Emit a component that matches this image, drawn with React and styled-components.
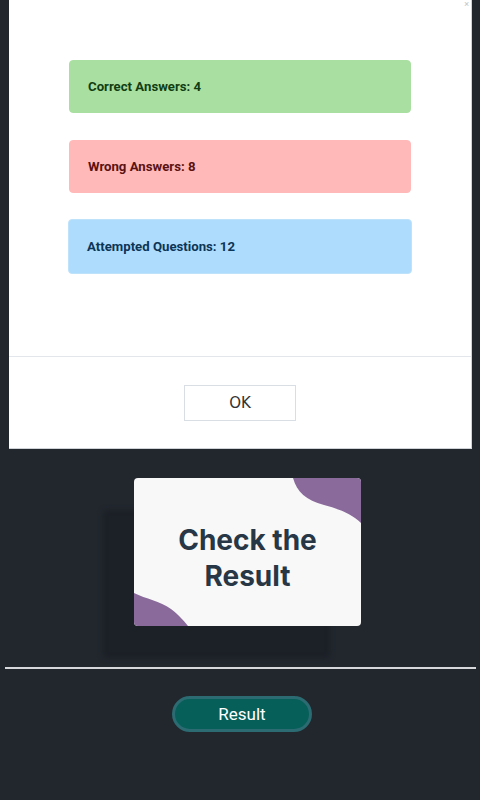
import styled, { createGlobalStyle } from "styled-components";

const GlobalStyle = createGlobalStyle`
  html, body {
    margin: 0;
    padding: 0;
    background-color: #22272e;
  }
  body {
    font-family: Roboto, "Liberation Sans", sans-serif;
  }
`;

const Page = styled.div`
  width: 480px;
  min-height: 800px;
  background-color: #22272e;
`;

const Modal = styled.div`
  position: relative;
  margin: 0 8px 0 9px;
  height: 449px;
  background-color: #fff;
  border-right: 1px solid #cfd3d8;
  border-bottom: 1px solid #cfd3d8;
  box-sizing: border-box;
  display: flex;
  flex-direction: column;
`;

const CloseMark = styled.span`
  position: absolute;
  top: 0;
  right: 2px;
  font-size: 9px;
  line-height: 9px;
  color: #c4c4c4;
`;

const ModalBody = styled.div`
  height: 357px;
  box-sizing: border-box;
  padding: 60px 60px 0;
  display: flex;
  flex-direction: column;
  gap: 27px;
  border-bottom: 1px solid #e3e6ea;
`;

const tones = {
  green: { bg: "#a9e0a1", fg: "#123d12", border: "#a9e0a1" },
  red: { bg: "#ffb9b9", fg: "#5a1212", border: "#ffb9b9" },
  blue: { bg: "#aedcfd", fg: "#0c3556", border: "#bfe2fb" },
};

const StatCard = styled.div`
  height: ${p => (p.$tone === "blue" ? "55px" : "53px")};
  margin: ${p => (p.$tone === "blue" ? "-1px -1px 0" : "0")};
  box-sizing: border-box;
  padding-left: 18px;
  display: flex;
  align-items: center;
  border-radius: 4px;
  border: 1px solid ${p => tones[p.$tone].border};
  background-color: ${p => tones[p.$tone].bg};
  color: ${p => tones[p.$tone].fg};
  font-family: Roboto, sans-serif;
  font-weight: 700;
  font-size: 13.2px;
`;

const ModalFooter = styled.div`
  flex: 1;
  display: flex;
  justify-content: center;
  padding-top: 28px;
  box-sizing: border-box;
`;

const OkButton = styled.button`
  width: 112px;
  height: 36px;
  background: #fff;
  border: 1px solid #d9dee4;
  color: #333;
  font-family: "DejaVu Sans", sans-serif;
  font-size: 15px;
  cursor: pointer;
`;

const Stage = styled.div`
  display: flex;
  justify-content: center;
  padding: 29px 0 41px 15px;
`;

const PromptCard = styled.div`
  position: relative;
  width: 227px;
  height: 148px;
  border-radius: 4px;
  overflow: hidden;
  background-color: #f8f8f8;
  box-shadow: -31px 32px 5px #1c2027;
  display: flex;
  align-items: center;
  justify-content: center;
`;

const Blob = styled.svg`
  position: absolute;
  left: 0;
  top: 0;
`;

const PromptText = styled.h2`
  position: relative;
  margin: 12px 0 0;
  text-align: center;
  font-family: Inter, "Noto Sans", sans-serif;
  font-weight: 700;
  font-size: 28px;
  line-height: 36px;
  color: #283746;
`;

const Divider = styled.hr`
  margin: 0 4px 0 5px;
  border: none;
  height: 2px;
  background-color: #d6d8dc;
`;

const ActionRow = styled.div`
  display: flex;
  justify-content: center;
  padding: 27px 0 0 4px;
`;

const ResultButton = styled.button`
  width: 140px;
  height: 36px;
  border-radius: 18px;
  border: 3px solid #2b6b71;
  background-color: #065f59;
  color: #fff;
  font-family: Roboto, sans-serif;
  font-size: 17px;
  cursor: pointer;
`;

const stats = [
  { tone: "green", label: "Correct Answers: 4" },
  { tone: "red", label: "Wrong Answers: 8" },
  { tone: "blue", label: "Attempted Questions: 12" },
];

export default function App() {
  return (
    <Page>
      <GlobalStyle />
      <Modal>
        <CloseMark>×</CloseMark>
        <ModalBody>
          {stats.map(s => (
            <StatCard key={s.tone} $tone={s.tone}>{s.label}</StatCard>
          ))}
        </ModalBody>
        <ModalFooter>
          <OkButton>OK</OkButton>
        </ModalFooter>
      </Modal>
      <Stage>
        <PromptCard>
          <Blob width="227" height="148" viewBox="0 0 227 148">
            <path d="M159 0 C163 14, 172 22, 190 27 C205 31, 218 36, 227 45 V0 Z" fill="#8a6a9b" />
            <path d="M0 115 C12 121, 26 123, 37 131 C45 137, 50 143, 54 148 H0 Z" fill="#8a6a9b" />
          </Blob>
          <PromptText>Check the<br />Result</PromptText>
        </PromptCard>
      </Stage>
      <Divider />
      <ActionRow>
        <ResultButton>Result</ResultButton>
      </ActionRow>
    </Page>
  );
}
